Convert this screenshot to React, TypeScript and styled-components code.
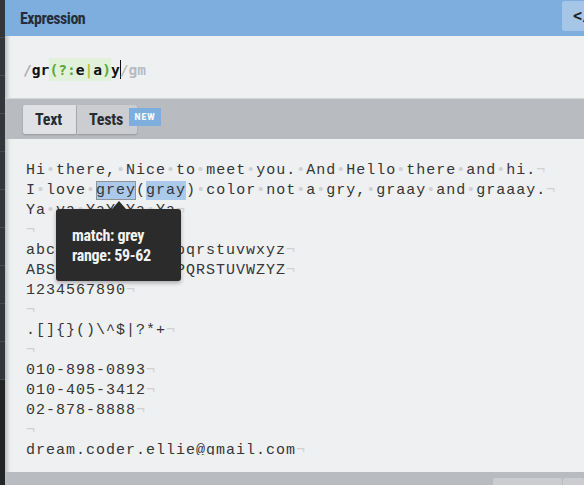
import styled, { createGlobalStyle } from "styled-components";

const GlobalStyle = createGlobalStyle`
  html, body {
    margin: 0;
    padding: 0;
    background: #2f3236;
  }
  #root {
    width: 584px;
    height: 485px;
    overflow: hidden;
  }
`;

const MONO = `"Liberation Mono", "DejaVu Sans Mono", monospace`;
const MONO_BOLD = `"DejaVu Sans Mono", "Liberation Mono", monospace`;
const CONDENSED = `"Liberation Sans Narrow", "Roboto Condensed", Roboto, "Liberation Sans", sans-serif`;

const Page = styled.div`
  display: flex;
  width: 584px;
  height: 485px;
  overflow: hidden;
`;

const Rail = styled.div`
  width: 5px;
  flex: none;
  display: flex;
  flex-direction: column;
  background: #222426;
`;

const RailItem = styled.div`
  height: 37px;
  flex: none;
  background: #33363a;
  border-bottom: 1px solid #474b50;
`;

const Main = styled.div`
  flex: 1;
  display: flex;
  flex-direction: column;
  min-width: 0;
  background: #eff0f2;
  box-shadow: inset 4px 0 4px -2px rgba(0, 0, 0, 0.25);
`;

const Header = styled.div`
  height: 36px;
  flex: none;
  display: flex;
  align-items: center;
  justify-content: space-between;
  padding-left: 15px;
  background: #7eaedd;
  overflow: hidden;
`;

const Title = styled.h2`
  margin: 0;
  font-family: ${CONDENSED};
  font-weight: 700;
  font-size: 16px;
  letter-spacing: -0.5px;
  color: #262d38;
`;

const CodeButton = styled.div`
  width: 40px;
  height: 30px;
  margin-right: -18px;
  margin-top: -4px;
  border-radius: 3px;
  background: #a6c6e7;
  display: flex;
  align-items: center;
  padding-left: 11px;
  box-sizing: border-box;
  font-family: ${MONO_BOLD};
  font-weight: 700;
  font-size: 15px;
  color: #222;
`;

const ExpressionRow = styled.div`
  height: 63px;
  flex: none;
  box-sizing: border-box;
  display: flex;
  align-items: center;
  padding: 5px 0 0 18px;
  border-bottom: 1px solid #d3d5d8;
  font-family: ${MONO_BOLD};
  font-weight: 700;
  font-size: 14.6px;
  color: #111;
`;

const Tok = styled.span<{ $c?: string }>`
  color: ${(p) => p.$c ?? "inherit"};
`;

const Group = styled.span`
  background: #e1f1db;
  padding: 3px 0;
`;

const Caret = styled.span`
  display: inline-block;
  width: 1px;
  height: 19px;
  background: #111;
  vertical-align: middle;
  margin-right: -1px;
`;

const TabBar = styled.div`
  height: 40px;
  flex: none;
  box-sizing: border-box;
  display: flex;
  align-items: flex-start;
  gap: 1px;
  padding: 6px 0 0 18px;
  background: #b8bbbf;
`;

const Tab = styled.div<{ $active?: boolean; $w: number }>`
  position: relative;
  width: ${(p) => p.$w}px;
  height: 29px;
  box-sizing: border-box;
  display: flex;
  align-items: center;
  padding-left: 12px;
  border-radius: ${(p) => (p.$active ? "2px 0 0 2px" : "0 2px 2px 0")};
  background: ${(p) => (p.$active ? "#dfe1e4" : "#cbcdd1")};
  box-shadow: 0 1px 2px rgba(0, 0, 0, 0.2);
  font-family: ${CONDENSED};
  font-weight: 700;
  font-size: 16px;
  letter-spacing: -0.2px;
  color: #262b33;
`;

const NewBadge = styled.span`
  position: absolute;
  top: 3px;
  left: 52px;
  width: 32px;
  height: 18px;
  display: flex;
  align-items: center;
  justify-content: center;
  background: #7eaedd;
  color: #f4f8fc;
  font-family: "Roboto", "Liberation Sans", sans-serif;
  font-weight: 900;
  font-size: 8.5px;
  letter-spacing: 1px;
`;

const Editor = styled.div`
  flex: 1;
  position: relative;
  overflow: hidden;
  padding: 22px 0 0 21px;
  margin-bottom: 17px;
  font-family: ${MONO};
  font-size: 15px;
  letter-spacing: 1px;
  color: #363636;
`;

const Line = styled.div`
  height: 20px;
  line-height: 20px;
  white-space: pre;
`;

const Ws = styled.span`
  color: #cfd1d4;
`;

const Match = styled.span<{ $hover?: boolean }>`
  background: #abc9ea;
  box-shadow: ${(p) => (p.$hover ? "inset 0 0 0 1px #8d939a" : "none")};
  padding: 1px 0;
`;

const Tooltip = styled.div`
  position: absolute;
  left: 51px;
  top: 70px;
  width: 125px;
  height: 72px;
  box-sizing: border-box;
  padding: 17px 16px 0;
  border-radius: 3px;
  background: #2b2b2b;
  box-shadow: 0 2px 4px rgba(0, 0, 0, 0.3);
  color: #f2f2f2;
  font-family: ${CONDENSED};
  font-weight: 700;
  font-size: 16px;
  line-height: 20px;
  letter-spacing: -0.3px;

  &::before {
    content: "";
    position: absolute;
    left: 56px;
    top: -8px;
    border: 7px solid transparent;
    border-top: 0;
    border-bottom: 8px solid #2b2b2b;
  }
`;

const BottomBar = styled.div`
  height: 13px;
  flex: none;
  display: flex;
  justify-content: flex-end;
  align-items: flex-end;
  gap: 1px;
  background: #b8bbbf;
`;

const BottomTab = styled.div<{ $w: number }>`
  width: ${(p) => p.$w}px;
  height: 7px;
  background: #cbcdd1;
  border-radius: 2px 2px 0 0;
`;

const TEXT = [
  "Hi there, Nice to meet you. And Hello there and hi.",
  "I love grey(gray) color not a gry, graay and graaay.",
  "Ya ya YaYaYa Ya",
  "",
  "abcdefghijklmnopqrstuvwxyz",
  "ABSCEFGHIJKLMNOPQRSTUVWZYZ",
  "1234567890",
  "",
  ".[]{}()\\^$|?*+",
  "",
  "010-898-0893",
  "010-405-3412",
  "02-878-8888",
  "",
  "dream.coder.ellie@gmail.com",
  "hello@daum.net",
];

const renderPlain = (s: string, key: string) =>
  s.split(/( )/).map((part, i) =>
    part === " " ? <Ws key={`${key}-${i}`}>•</Ws> : <span key={`${key}-${i}`}>{part}</span>
  );

const TextLine = ({ text, idx }: { text: string; idx: number }) => {
  if (idx === 1) {
    return (
      <Line>
        {renderPlain("I love ", "a")}
        <Match $hover>grey</Match>(<Match>gray</Match>)
        {renderPlain(" color not a gry, graay and graaay.", "b")}
        <Ws>¬</Ws>
      </Line>
    );
  }
  return (
    <Line>
      {renderPlain(text, String(idx))}
      <Ws>¬</Ws>
    </Line>
  );
};

const App = () => {
  return (
    <Page>
      <GlobalStyle />
      <Rail>
        {Array.from({ length: 10 }).map((_, i) => (
          <RailItem key={i} />
        ))}
      </Rail>
      <Main>
        <Header>
          <Title>Expression</Title>
          <CodeButton>&lt;/&gt;</CodeButton>
        </Header>
        <ExpressionRow>
          <Tok $c="#a9abaf">/</Tok>
          gr
          <Group>
            <Tok $c="#5da83a">(?:</Tok>e<Tok $c="#b5bf3c">|</Tok>a<Tok $c="#5da83a">)</Tok>
          </Group>
          y<Caret />
          <Tok $c="#b9bbbf">/gm</Tok>
        </ExpressionRow>
        <TabBar>
          <Tab $active $w={53}>Text</Tab>
          <Tab $w={60}>
            Tests
            <NewBadge>NEW</NewBadge>
          </Tab>
        </TabBar>
        <Editor>
          {TEXT.map((t, i) => (
            <TextLine key={i} text={t} idx={i} />
          ))}
          <Tooltip>
            <div>match: grey</div>
            <div>range: 59-62</div>
          </Tooltip>
        </Editor>
        <BottomBar>
          <BottomTab $w={69} />
          <BottomTab $w={21} />
        </BottomBar>
      </Main>
    </Page>
  );
};

export default App;
